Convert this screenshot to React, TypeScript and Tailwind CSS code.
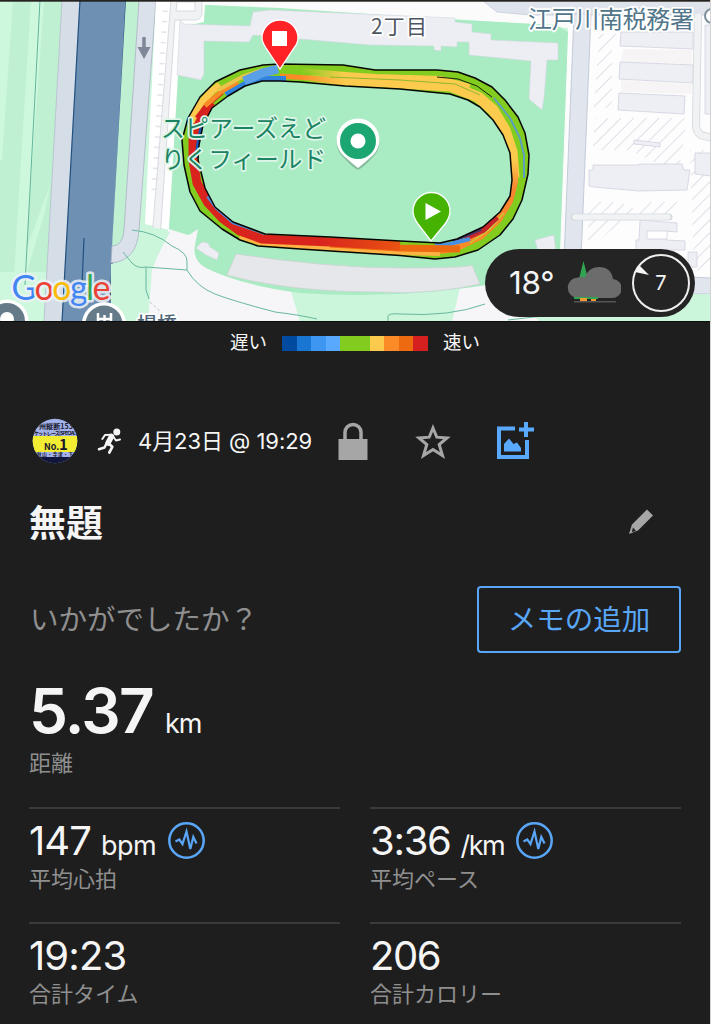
const OUTER =
  'M280 64L263 65L240 70L215 82L200 97L188 118L182 140L184 165L190 192L200 211L222 229L240 240L258 246L300 249L400 255.500L435 259L455 257L478 250L500 235L513 219L522 200L528 174L529 155L525 133L518 117L505 100L492 87L475 78L458 72L437 70L375 70L343 65Z';
const INNER =
  'M280 81L262 81L245 86L228 96L212 108L203 125L199 145L198 160L205 188L215 207L233 222L265 234L330 237L400 241L440 243L457 239L483 227L500 212L510 196L512 180L510 153L503 135L493 120L480 107L468 100L450 94L400 89L345 86L300 82Z';

const paceColors = [
  'bg-[#004a9f]',
  'bg-[#1976d2]',
  'bg-[#3d96f2]',
  'bg-[#59a9ff]',
  'bg-[#82cb1f]',
  'bg-[#82cb1f]',
  'bg-[#fccb4d]',
  'bg-[#fb8b27]',
  'bg-[#ee6a10]',
  'bg-[#d62020]',
];

const stats = [
  { value: '147', unit: 'bpm', label: '平均心拍', chart: true, tracking: 'tracking-[-0.900px]', unitTracking: 'tracking-[-0.600px]' },
  { value: '3:36', unit: '/km', label: '平均ペース', chart: true, tracking: 'tracking-[-1.300px]', unitTracking: 'tracking-[-1.500px]' },
  { value: '19:23', unit: '', label: '合計タイム', chart: false, tracking: 'tracking-[-0.900px]', unitTracking: '' },
  { value: '206', unit: '', label: '合計カロリー', chart: false, tracking: 'tracking-[-1.400px]', unitTracking: '' },
];

function TrackRoute() {
  return (
    <g fill="none" strokeLinejoin="round">
      <g clipPath="url(#ring)">
        <path d={OUTER} fill="#82cb1f" />
        {/* top straight */}
        <path d="M300 70L345 74L375 76L440 78L470 86" stroke="url(#fadeTop)" strokeWidth="4" />
        <path d="M310 79L345 80L400 83L450 86L478 97L493 110L505 130L512 152L514 178" stroke="url(#fadeTop)" strokeWidth="11" />
        <path d="M280 76L310 78L345 82" stroke="url(#fadeOrange)" strokeWidth="5" />
        <path d="M330 77L400 80L455 84L480 95" stroke="#8fb52f" strokeWidth="1" />
        <path d="M437 77L458 79L477 86L492 97" stroke="#16220a" strokeWidth="1" />
        {/* right bend */}
        <path d="M494 98L510 118L520 138L524 155L524 178" stroke="#5c9fc0" strokeWidth="2" />
        <path d="M514 160L514 182L509 201L498 219L480 236L455 248L440 250" stroke="url(#bend)" strokeWidth="8" />
        <path d="M504 213L489 230L470 243" stroke="#c5cb38" strokeWidth="1.500" />
        <path d="M497 217L483 230L465 238" stroke="#c4262c" strokeWidth="6" />
        <path d="M481 229L452 241" stroke="#4b3567" strokeWidth="4" />
        <path d="M470 239L450 244L435 245" stroke="#4a90e2" strokeWidth="4" />
        {/* bottom straight and left bend */}
        <path d="M440 252L400 251L300 245L262 242L240 235" stroke="#fdb344" strokeWidth="8" />
        <path d="M460 249L400 248L330 244" stroke="#ee6a10" strokeWidth="7" />
        <path d="M400 246L330 242L262 239L240 231L222 218L208 203L197 183L193 160L193 140L198 122L211 102" stroke="url(#slow)" strokeWidth="9" />
        <path d="M265 233L233 222L217 208L208 196" stroke="#4a90e2" strokeWidth="4" />
        <path d="M198 158L199 145L203 125" stroke="#1a56b0" strokeWidth="6" />
        <path d="M191 122L199 105L212 91L220 85" stroke="#fccb4d" strokeWidth="7" />
        <path d="M197 118L208 104L222 92" stroke="#d62020" strokeWidth="5" />
        <path d="M205 106L222 91L238 82" stroke="#fb8b27" strokeWidth="5" />
        <path d="M218 90L242 77L262 70" stroke="#e8c44c" strokeWidth="4" />
        <path d="M226 95L245 84L262 79L286 79" stroke="#2f83dc" strokeWidth="6" />
        <path d="M244 81L262 73L278 69" stroke="#5aa0e6" strokeWidth="9" />
      </g>
      <path d={OUTER} stroke="#050505" strokeWidth="1.500" />
      <path d={INNER} stroke="#050505" strokeWidth="1.500" />
    </g>
  );
}

function MapView() {
  return (
    <svg className="block h-full w-full" viewBox="0 0 711 322">
      <defs>
        <clipPath id="ring">
          <path d={OUTER + INNER} clipRule="evenodd" />
        </clipPath>
        <linearGradient id="bend" x1="0" y1="160" x2="0" y2="235" gradientUnits="userSpaceOnUse">
          <stop offset="0" stopColor="#fccb4d" />
          <stop offset="0.400" stopColor="#f98430" />
          <stop offset="1" stopColor="#fb8b27" />
        </linearGradient>
        <linearGradient id="slow" x1="320" y1="0" x2="400" y2="0" gradientUnits="userSpaceOnUse">
          <stop offset="0" stopColor="#d9241e" />
          <stop offset="1" stopColor="#e85312" />
        </linearGradient>
        <linearGradient id="fadeTop" x1="300" y1="0" x2="345" y2="0" gradientUnits="userSpaceOnUse">
          <stop offset="0" stopColor="#82cb1f" />
          <stop offset="1" stopColor="#fccb4d" />
        </linearGradient>
        <linearGradient id="fadeOrange" x1="300" y1="0" x2="345" y2="0" gradientUnits="userSpaceOnUse">
          <stop offset="0" stopColor="#fb8b27" />
          <stop offset="1" stopColor="#fccb4d" />
        </linearGradient>
        <pattern id="hatch" width="9" height="9" patternUnits="userSpaceOnUse" patternTransform="rotate(45)">
          <path d="M0 0V9" stroke="#dfe0e8" strokeWidth="2" />
        </pattern>
      </defs>

      <rect width="711" height="322" fill="#cbf6dc" />

      {/* riverside */}
      <path d="M0 0H62L45 322H0Z" fill="#bff0d2" />
      <path d="M0 0H13L2 160H0ZM31 0H44L26 250L50 185L44 215L26 275H14Z" fill="#cdf8de" />
      <path d="M0 272H47L45 322H0Z" fill="#cdf8de" />
      <path d="M40 0L25 285" stroke="#63b59c" strokeWidth="1" />
      <path d="M62 0H80L62 322H44Z" fill="#d5dde7" stroke="#b5bccb" strokeWidth="0.800" />
      <path d="M80 0H126L109 322H62Z" fill="#6e90b3" stroke="#235181" strokeWidth="1.200" />
      <path d="M84 238L82 285" stroke="#235181" strokeWidth="1.200" />
      <path d="M126 0H140L124 236Q123 245 112 246Z" fill="#bff0d2" />
      <path d="M139 0H156L139 230Q137 261 111 263L112 246Q123 246 124 230Z" fill="#dbe1ea" stroke="#aab2c2" strokeWidth="0.800" />

      {/* car park strip */}
      <path d="M156 0H206L204 22L178 120L169 230L145 224Z" fill="#fff" />
      <path d="M166 0L154 190" stroke="#e3e3ea" strokeWidth="5" strokeDasharray="1.500 9" />
      <path d="M176 0H171L152 238L160 239L175 20H196Q202 19 202 12V0Z" fill="#f0f2f4" stroke="#d0d3da" strokeWidth="0.800" />
      <path d="M177 2H195V11H176Z" fill="#fff" stroke="#d0d3da" strokeWidth="0.800" />

      {/* south paths area */}
      <path d="M169 228L190 235L198 229L215 262L290 288L300 322H148L152 270Z" fill="#f6f5f7" />
      <path d="M148 226L170 232L150 270L130 300L111 322V264Q139 262 141 229Z" fill="#cbf6dc" />
      <path d="M460 287L500 280L540 322H452Z" fill="#f6f5f7" />

      {/* streets right of the field */}
      <path d="M206 0H711V322H690V250H560L568 28L470 20L206 5Z" fill="#fbfbfc" />
      <path d="M568 26L711 10V284H564Z" fill="#fdfdfe" />
      <path d="M482 0L497 12L530 15H711V0Z" fill="#dfe4ec" stroke="#c7ceda" strokeWidth="0.800" />
      <path d="M574 14H591L581 260H564Z" fill="#e0e5ee" stroke="#b9c2d1" strokeWidth="0.800" />
      <path d="M599 34H625L612 48V108H594ZM595 118H687L680 165H660L630 150H593ZM588 202H620L645 214H630L588 250ZM690 150H711V270H694ZM640 202H684L675 214H640Z" fill="url(#hatch)" />
      <path d="M623 49L692 50V64L621 62ZM621 80L692 84V94L621 92Z" fill="#f7f4f6" />
      <g fill="#eeeff5" stroke="#cfd1dd" strokeWidth="0.800">
        <path d="M621 32H693L693 49L620 46ZM620 62L693 65V83L619 79ZM619 93L685 96L684 114L618 110Z" />
        <path d="M634 140L660 143V147L634 144ZM593 165H639V164H682L684 170H690L687 190L639 191L594 187L589 186V170H593ZM695 153H711V176L695 174ZM705 25H711V114H705Z" />
        <path d="M640 220L677 223V232L666 231V240L685 241V250H636L636 240L639 240ZM688 252H697V267H688Z" />
      </g>
      <path d="M647 231H667V239H647Z" fill="#fff" stroke="#cfd1dd" strokeWidth="0.800" />
      <path d="M574 217L669 217" stroke="#d5dadd" strokeWidth="7" strokeLinecap="round" />
      <path d="M575 217L668 217" stroke="#f0f2f4" strokeWidth="5.500" strokeLinecap="round" />
      <path d="M698 14L696 126Q697 137 711 137" fill="none" stroke="#d0d6d9" strokeWidth="8" />
      <path d="M698 14L696 126Q697 137 711 137" fill="none" stroke="#f0f2f4" strokeWidth="6.500" />
      <path d="M690 277L711 278V294H690Z" fill="#e0e5ee" stroke="#b9c2d1" strokeWidth="0.800" />
      <path d="M640 294H711V322H640Z" fill="#cbf6dc" />

      {/* field */}
      <path d="M205 5L280 8L460 20L556 25L568 32L560 250L500 283Q400 300 300 293Q240 285 206 268Q192 260 195 245L198 229L188 235L169 229L178 75L185 26L204 22Z" fill="#a9ebc3" />
      <g fill="#edeef4" stroke="#d3d6df" strokeWidth="0.600">
        <path d="M180 20L184 24L250 26L253 12L270 10L455 18V22L472 24V32L491 34V40L558 43V60L547 60L544 98L542 110L529 99L531 61L469 55V42H457V47L441 46V51L434 50V46L370 45L253 35L249 42L204 41V74L201 80L177 75Z" />
        <path d="M202 242L208 243L210 247L219 253L217 260L206 255L196 248Z" />
        <path d="M535 240L554 235L556 255H539Z" />
      </g>
      <path d="M236 254Q330 268 400 268T472 265L480 284Q430 295 380 292Q290 292 227 275Z" fill="#e6e7eb" stroke="#cfd3d6" strokeWidth="0.800" />
      <g fill="none" stroke="#67b89e" strokeWidth="1">
        <path d="M132 230Q155 232 172 246Q188 253 187 262V270L146 267Q138 269 132 263L123 252M187 270Q197 287 215 294T275 312Q300 315 317 319M146 267V290L149 299M388 322V316Q389 313 400 314Q450 317 485 304M508 320L560 314" />
      </g>
      <path d="M150 302L170 320" stroke="#c5c9cc" strokeWidth="1" strokeDasharray="3 2" />

      <path d="M144 37V48" stroke="#7d8797" strokeWidth="3.500" />
      <path d="M137.500 47H150.500L144 59Z" fill="#7d8797" />

      <TrackRoute />

      {/* labels */}
      <g
        className="font-['Noto_Sans_CJK_JP',sans-serif]"
        stroke="#fff"
        strokeWidth="3.500"
        strokeLinejoin="round"
        paintOrder="stroke"
      >
        <g fill="#1c8462" fontSize="23.800" stroke="#dcf6e8">
          <text x="161" y="137" textLength="165">スピアーズえど</text>
          <text x="161" y="168" textLength="165">りくフィールド</text>
        </g>
        <text x="371" y="34" fontSize="21" fill="#4e5661" textLength="56">2丁目</text>
        <text x="528" y="28" fontSize="24" fill="#51758a" textLength="166">江戸川南税務署</text>
        <text x="137" y="332" fontSize="20" fontWeight="500" fill="#4e6478">場橋一</text>
      </g>
      <circle cx="712" cy="16" r="7" fill="#fff" stroke="#7b909c" strokeWidth="2" />

      {/* clipped place pins */}
      <circle cx="7" cy="321" r="21.500" fill="#fff" />
      <circle cx="7" cy="321" r="18" fill="#667b8a" />
      <circle cx="7" cy="319" r="7" fill="#fff" />
      <circle cx="104" cy="324" r="22" fill="#fff" />
      <circle cx="104" cy="324" r="18.500" fill="#667b8a" />
      <path d="M98 313V322M104.500 315V322M111 313V322M98 319H111" stroke="#fff" strokeWidth="2.500" />

      <text
        x="11.500"
        y="300"
        className="font-['Lato',sans-serif]"
        fontSize="34"
        stroke="#eef3f7"
        strokeOpacity="0.850"
        strokeWidth="5"
        strokeLinejoin="round"
        paintOrder="stroke"
        textLength="99"
      >
        <tspan fill="#4285f4">G</tspan>
        <tspan fill="#ea4335">o</tspan>
        <tspan fill="#fbbc05">o</tspan>
        <tspan fill="#4285f4">g</tspan>
        <tspan fill="#34a853">l</tspan>
        <tspan fill="#ea4335">e</tspan>
      </text>

      {/* place, finish and start markers */}
      <path d="M358 169Q352 166 344 157A21.500 21.500 0 1 1 372 157Q364 166 358 169Z" transform="translate(0 1)" fill="#719e85" opacity="0.600" />
      <path d="M358 168Q353 164 345 157A21.500 21.500 0 1 1 371 157Q363 164 358 168Z" fill="#fff" />
      <circle cx="358" cy="141" r="18" fill="#1ba672" />
      <circle cx="358" cy="141" r="7.500" fill="#fff" />

      <path d="M280 69L266 48Q262 42 262 38A18 18 0 1 1 298 38Q298 43 294 48Z" fill="#ff2327" stroke="#fff" strokeWidth="1.300" />
      <rect x="272" y="31" width="15" height="15" fill="#fff" />
      <path d="M431 241L418 224Q413 217 413 211A18.500 18.500 0 1 1 450 211Q450 217 445 224Z" fill="#46b302" stroke="#fff" strokeWidth="1.300" />
      <path d="M425.500 203V220L441 211.500Z" fill="#fff" />

      <rect width="711" height="1.700" fill="#25231f" />
      <rect y="321" width="711" height="1" fill="#0c0c0c" />
    </svg>
  );
}

function WeatherBadge() {
  return (
    <div className="absolute left-[485px] top-[249px] flex h-[68px] w-[210px] items-center rounded-full bg-[#242424] text-[#f5f5f5]">
      <span className="w-[82px] pl-[24px] font-['Inter',sans-serif] text-[31.500px] leading-none tracking-[-0.300px]">18°</span>
      <svg width="54" height="48" viewBox="566 260 54 48">
        <path d="M582.500 262L587 280H578Z" fill="#31a452" />
        <path d="M577 299A9.500 9.500 0 0 1 577 278.500Q581 277 584 278.500Q587 268 598 268Q610 268 612 280A9.500 9.500 0 0 1 610.500 299Z" fill="#6c6c6c" />
        <path d="M573 298H597V300H573Z" fill="#31a452" />
        <path d="M579 299H586V302H579ZM590 300H595V302H590Z" fill="#ef9b30" />
        <path d="M573 302.800H615" stroke="#555" strokeWidth="1.500" />
      </svg>
      <div className="relative ml-[11px] flex h-[58px] w-[58px] items-center justify-center rounded-full border-2 border-[#eee]">
        <svg className="absolute left-0 top-[7px]" width="16" height="16" viewBox="0 0 16 16">
          <path d="M5 2L15 12L1 9Z" fill="#f5f5f5" />
        </svg>
        <span className="font-['Inter',sans-serif] text-[20px] leading-none">7</span>
      </div>
    </div>
  );
}

function Avatar() {
  return (
    <svg width="46" height="46" viewBox="0 0 46 46">
      <defs>
        <clipPath id="avatar">
          <circle cx="23" cy="23" r="22.300" />
        </clipPath>
      </defs>
      <g clipPath="url(#avatar)" className="font-['Noto_Sans_CJK_JP',sans-serif]" fontWeight="700" fill="#17172c">
        <rect width="46" height="46" fill="#a3b2ea" />
        <rect y="18" width="46" height="16" fill="#f2ec33" />
        <rect y="39" width="46" height="8" fill="#11163c" />
        <text x="7" y="10.500" fontSize="7" textLength="34">州縦断153</text>
        <text x="2" y="17" fontSize="5" textLength="42">ケットレース(SPECIAL</text>
        <text x="12" y="32" fontSize="9">No.</text>
        <text x="27" y="32" fontSize="15">1</text>
        <text x="5" y="38" fontSize="4.500" textLength="36">秋山・寺津・下</text>
      </g>
    </svg>
  );
}

function RunnerIcon() {
  return (
    <svg width="26" height="28" viewBox="97 427 26 28">
      <circle cx="116.800" cy="432" r="3.500" fill="#f5f5f5" />
      <g fill="none" stroke="#f5f5f5" strokeLinecap="round" strokeLinejoin="round">
        <path d="M111.500 436.500L108 443" strokeWidth="5.500" />
        <path d="M111 434.800L105 435L102.300 439" strokeWidth="2" />
        <path d="M113.500 437L116 440.500L120 439.500" strokeWidth="2" />
        <path d="M108 443L112.300 446.800L109.300 452.500" strokeWidth="2.700" />
        <path d="M106.500 443.500L104.500 447.500L99 449.300" strokeWidth="2.500" />
      </g>
    </svg>
  );
}

function PulseIcon() {
  return (
    <svg width="37" height="37" viewBox="0 0 37 37" fill="none" stroke="#59a6f7">
      <circle cx="18.500" cy="18.500" r="17.200" strokeWidth="2.500" />
      <path d="M7.500 19.500L11.300 17.500L14.500 22L18.500 9.500L22.300 27L25.300 15L28.500 21.500" strokeWidth="2.200" />
    </svg>
  );
}

export default function App() {
  return (
    <div className="h-[1024px] w-[711px] overflow-hidden border-r border-[#d2d2d2] bg-[#1e1e1e] font-['Inter','Noto_Sans_CJK_JP',sans-serif] text-[#f5f5f5]">
      <div className="relative h-[322px] w-[711px]">
        <MapView />
        <WeatherBadge />
      </div>

      <div className="flex h-[42px] items-center justify-center gap-[15px] text-[18.500px]">
        <span>遅い</span>
        <div className="flex h-[15px] w-[146px]">
          {paceColors.map((color, i) => (
            <div key={i} className={`flex-1 ${color}`} />
          ))}
        </div>
        <span>速い</span>
      </div>

      <div className="mt-[51px] flex h-[52px] items-center pl-[32px]">
        <Avatar />
        <div className="ml-[19px]">
          <RunnerIcon />
        </div>
        <span className="ml-[15px] w-[177px] whitespace-nowrap text-[22px] tracking-[-0.050px]">4月23日 @ 19:29</span>
        <svg className="ml-[23px]" width="30" height="38" viewBox="0 0 30 38">
          <path d="M7 18V10.500A8 8 0 0 1 23 10.500V18" fill="none" stroke="#a6a6a6" strokeWidth="3.500" />
          <rect x="0.500" y="17" width="29" height="21" fill="#a6a6a6" />
        </svg>
        <svg className="ml-[47px]" width="36" height="35" viewBox="0 0 36 35">
          <path d="M18 4L21.800 13.200L32 14L24.200 20.500L27.500 31.500L18 25.500L8.500 31.500L11.800 20.500L4 14L14.200 13.200Z" fill="none" stroke="#a6a6a6" strokeWidth="3" />
        </svg>
        <svg className="ml-[45px]" width="38" height="38" viewBox="496 421 38 38">
          <path d="M515 427.500H499V456H527V439" fill="none" stroke="#59a9ff" strokeWidth="4" />
          <path d="M526 421V436M519 428.500H534" stroke="#59a9ff" strokeWidth="4" />
          <path d="M504 450.500V443L509 437.500L513.500 443L517 441.500L521 447V450.500Z" fill="#59a9ff" />
        </svg>
      </div>

      <div className="mt-[30px] flex h-[50px] items-center justify-between pl-[29px] pr-[56px]">
        <h1 className="pt-[3px] text-[37px] font-bold">無題</h1>
        <svg width="26" height="26" viewBox="0 0 26 26">
          <path d="M19 0.500L25 6.500L10 21.500L1 25L4 15.500Z" fill="#a6a6a6" />
          <path d="M5 18.500L8 22L3.800 23Z" fill="#1e1e1e" />
        </svg>
      </div>

      <div className="mt-[39px] flex h-[67px] items-center justify-between pl-[30px] pr-[29px]">
        <span className="pt-[2px] text-[28.500px] text-[#8f8f8f]">いかがでしたか？</span>
        <button className="h-[67px] w-[204px] rounded-[4px] border-2 border-[#59a6f7] pt-[2px] text-[28.500px] text-[#59a6f7]">
          メモの追加
        </button>
      </div>

      <div className="mt-[27px] flex items-baseline gap-[12px] pl-[29px] leading-none">
        <span className="text-[62px] font-semibold leading-none tracking-[-1.700px]">5.37</span>
        <span className="text-[27px] leading-none tracking-[-1.300px]">km</span>
      </div>
      <p className="mt-[10px] pl-[29px] text-[22px] leading-[22px] text-[#8f8f8f]">距離</p>

      <div className="mt-[33px] grid grid-cols-[311px_311px] gap-x-[30px] pl-[29px]">
        {stats.map((s) => (
          <div key={s.label} className="h-[115px] border-t-2 border-[#3a3a3a] pt-[12px]">
            <div className="flex h-[40px] items-start">
              <div className="flex items-baseline gap-[10px]">
                <span className={`text-[40px] leading-none ${s.tracking}`}>{s.value}</span>
                {s.unit && <span className={`text-[27px] leading-none ${s.unitTracking}`}>{s.unit}</span>}
              </div>
              {s.chart && (
                <div className="ml-[12px] mt-[1px]">
                  <PulseIcon />
                </div>
              )}
            </div>
            <p className="mt-[7px] text-[22px] leading-[22px] text-[#8f8f8f]">{s.label}</p>
          </div>
        ))}
      </div>
    </div>
  );
}
